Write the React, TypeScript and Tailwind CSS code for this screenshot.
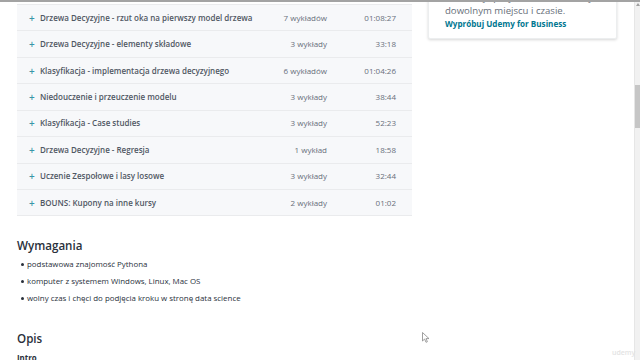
import React from 'react';

// CURRICULUM SECTION
const sections = [
  { title: 'Drzewa Decyzyjne - rzut oka na pierwszy model drzewa', count: '7 wykładów', time: '01:08:27' },
  { title: 'Drzewa Decyzyjne - elementy składowe', count: '3 wykłady', time: '33:18' },
  { title: 'Klasyfikacja - implementacja drzewa decyzyjnego', count: '6 wykładów', time: '01:04:26' },
  { title: 'Niedouczenie i przeuczenie modelu', count: '3 wykłady', time: '38:44' },
  { title: 'Klasyfikacja - Case studies', count: '3 wykłady', time: '52:23' },
  { title: 'Drzewa Decyzyjne - Regresja', count: '1 wykład', time: '18:58' },
  { title: 'Uczenie Zespołowe i lasy losowe', count: '3 wykłady', time: '32:44' },
  { title: 'BOUNS: Kupony na inne kursy', count: '2 wykłady', time: '01:02' },
];

const requirements = [
  'podstawowa znajomość Pythona',
  'komputer z systemem Windows, Linux, Mac OS',
  'wolny czas i chęci do podjęcia kroku w stronę data science',
];

const SectionRow = ({ s }: { s: typeof sections[number] }) => (
  <div className="flex items-center h-[26.43px] border-b border-[#eaebed] bg-[#f7f8fa] pl-[12px] pr-[16px]">
    <span className="w-[11px] text-[#3a95a8] text-[10px] font-semibold leading-none">+</span>
    <span className="flex-1 text-[8px] font-semibold text-[#505763] whitespace-nowrap">{s.title}</span>
    <span className="w-[70px] text-right text-[8px] text-[#686f7a]">{s.count}</span>
    <span className="w-[69px] text-right text-[8px] text-[#686f7a]">{s.time}</span>
  </div>
);

export default function App() {
  return (
    <div className="relative w-[640px] h-[360px] overflow-hidden bg-white" style={{ fontFamily: '"Open Sans", "Noto Sans", sans-serif' }}>
      <div className="flex">
        {/* left column */}
        <div className="w-[412px] pl-[17px]">
          <div className="mt-[4px] border-t border-[#eaebed]">
            {sections.map((s) => (
              <SectionRow key={s.title} s={s} />
            ))}
          </div>

          <h2 className="mt-[24px] text-[11.6px] font-semibold text-[#29303b] leading-[12px]">Wymagania</h2>
          <ul className="mt-[6.5px] flex flex-col gap-[6px]">
            {requirements.map((r) => (
              <li key={r} className="flex items-center gap-[3px] pl-[4px] text-[7.9px] text-[#29303b] leading-[11px]">
                <span className="w-[3px] h-[3px] rounded-full bg-[#29303b]" />
                <span>{r}</span>
              </li>
            ))}
          </ul>

          <h2 className="mt-[29.5px] text-[11.6px] font-semibold text-[#29303b] leading-[12px]">Opis</h2>
          <p className="mt-[7.5px] text-[7.9px] leading-[11px] font-bold text-[#29303b]">Intro</p>
        </div>

        {/* right column */}
        <div className="ml-[16px] w-[189px]">
          <div className="-mt-[10.5px] bg-white rounded-[2px] shadow-[0_1px_3px_rgba(0,0,0,0.16)] border border-[#eceeef] pl-[16px] pr-[10px] pb-[8px]">
            <p className="text-[9.6px] leading-[13px] text-[#686f7a] whitespace-nowrap">3 000 najlepszych kursów Udemy w</p>
            <p className="text-[9.6px] leading-[13px] text-[#686f7a] whitespace-nowrap">dowolnym miejscu i czasie.</p>
            <p className="text-[8.1px] leading-[13px] font-bold text-[#007791] whitespace-nowrap">Wypróbuj Udemy for Business</p>
          </div>
        </div>
      </div>

      {/* top gray strip */}
      <div className="absolute top-0 left-0 w-full h-[2px] bg-[#a3a3a3]" />

      {/* scrollbar */}
      <div className="absolute top-[2px] right-0 w-[6px] h-[358px] bg-[#f1f1f1] border-l border-[#e6e6e6]">
        <div className="mx-auto mt-[1px] w-0 h-0 border-l-[2px] border-r-[2px] border-b-[3px] border-l-transparent border-r-transparent border-b-[#a0a0a0]" />
        <div className="mt-[79px] w-full h-[43px] bg-[#c6c6c6]" />
      </div>

      {/* watermark */}
      <span className="absolute left-[612px] top-[348px] text-[7px] text-[#e3e3e3] font-semibold">udemy</span>

      {/* cursor */}
      <svg className="absolute left-[422px] top-[332px]" width="8" height="11" viewBox="0 0 8 11">
        <path d="M0.5 0.5 L0.5 9 L2.6 7 L4 10.3 L5.4 9.7 L4 6.6 L7 6.6 Z" fill="#fff" stroke="#888" strokeWidth="0.8" />
      </svg>
    </div>
  );
}
